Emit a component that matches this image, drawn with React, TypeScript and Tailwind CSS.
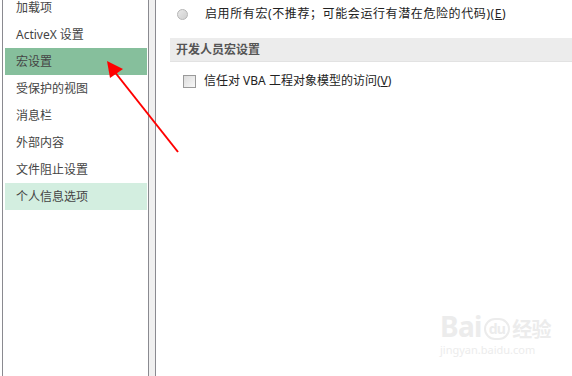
import React from "react";

const navItems = [
  "加载项",
  "ActiveX 设置",
  "宏设置",
  "受保护的视图",
  "消息栏",
  "外部内容",
  "文件阻止设置",
  "个人信息选项",
];

const font = { fontFamily: '"Noto Sans", "Noto Sans CJK SC", sans-serif' };

export default function App() {
  return (
    <div
      className="relative flex h-[376px] w-[572px] overflow-hidden bg-white text-[12px] text-[#444]"
      style={font}
    >
      {/* Sidebar */}
      <div className="ml-[2px] flex h-full w-[147px] flex-col border-x border-[#8a8a90] pl-[2px] pr-[1px]">
        <div className="mt-[-6px] flex flex-col">
          {navItems.map((label, i) => (
            <div
              key={label}
              className={
                "flex h-[27px] items-center pl-[11px] " +
                (i === 2 ? "bg-[#86bf9c]" : i === 7 ? "bg-[#d3eee0]" : "")
              }
            >
              {label}
            </div>
          ))}
        </div>
      </div>

      {/* Splitter */}
      <div className="h-full w-[7px] border-r border-[#8a8a90] bg-[#f0f0f0]" />

      {/* Content */}
      <div className="flex flex-1 flex-col">
        <div className="flex h-[28px] items-center pl-[21px]">
          <span className="h-[11px] w-[11px] rounded-full border border-[#b5b5b5] bg-gradient-to-br from-[#e8e8e8] to-[#cfcfcf]" />
          <span className="ml-[17px] tracking-[0.6px] text-[#222]">
            启用所有宏(不推荐；可能会运行有潜在危险的代码)(<span className="underline">E</span>)
          </span>
        </div>
        <div className="ml-[14px] mt-[10px] flex h-[24px] items-center border-b border-[#e2e2e2] bg-[#ececec] pl-[6px] font-bold text-[#555]">
          开发人员宏设置
        </div>
        <div className="mt-[10px] flex items-center pl-[27px]">
          <span className="h-[13px] w-[13px] border border-[#9a9a9a] bg-gradient-to-br from-[#dcdcdc] to-[#f8f8f8]" />
          <span className="ml-[8px] text-[#222]">
            信任对 VBA 工程对象模型的访问(<span className="underline">V</span>)
          </span>
        </div>
      </div>

      {/* Watermark */}
      <div className="absolute left-[440px] top-[312px] flex flex-col items-start text-[#ececec]">
        <div className="flex items-end text-[28px] font-bold leading-none tracking-tight">
          <span>Bai</span>
          <span className="ml-[2px] rounded-full border-2 border-[#ececec] px-[3px] text-[14px] leading-[18px]">du</span>
          <span className="ml-[2px] text-[20px]">经验</span>
        </div>
        <div className="mt-[4px] text-[11px] leading-none">jingyan.baidu.com</div>
      </div>

      {/* Red arrow */}
      <svg className="pointer-events-none absolute left-0 top-0" width="572" height="376">
        <line x1="178" y1="152" x2="114" y2="71" stroke="#ff0000" strokeWidth="2" />
        <polygon points="107,61 123,69 110,78" fill="#ff0000" />
      </svg>
    </div>
  );
}
